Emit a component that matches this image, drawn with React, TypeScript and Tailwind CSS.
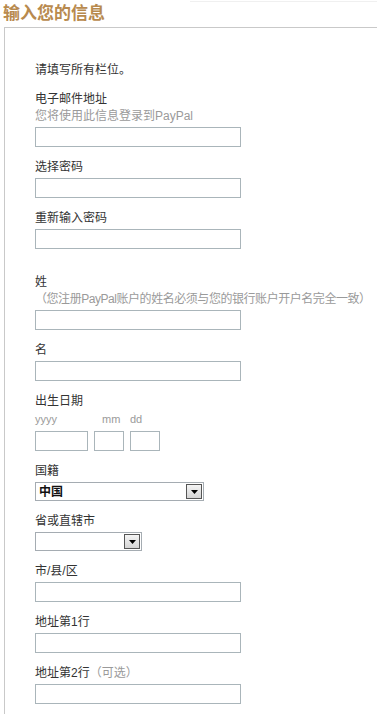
import React from "react";

const font = "font-['Liberation_Sans','Noto_Sans_CJK_SC',sans-serif]";

function Input({ w = "w-[206px]" }: { w?: string }) {
  return <div className={`${w} h-[20px] border border-[#aab5ba] bg-white mt-[2px]`} />;
}

function Label({ children }: { children: React.ReactNode }) {
  return <div className="text-[12px] leading-[17px] text-[#333] whitespace-nowrap">{children}</div>;
}

function Sub({ children, cls = "" }: { children: React.ReactNode; cls?: string }) {
  return <div className={`text-[12px] leading-[17px] text-[#9a9a9a] whitespace-nowrap ${cls}`}>{children}</div>;
}

function Select({ w, value }: { w: string; value?: string }) {
  return (
    <div className={`${w} h-[19px] border border-[#a5acb2] bg-white mt-[2px] flex items-center justify-between`}>
      <span className="pl-[3px] text-[12px] font-bold text-[#111] leading-none">{value}</span>
      <div className="w-[16px] h-[15px] mr-[1px] border border-[#555] bg-gradient-to-b from-[#f4f4f4] to-[#d4d4d4] flex items-center justify-center">
        <svg width="7" height="4" viewBox="0 0 7 4">
          <polygon points="0,0 7,0 3.5,4" fill="#000" />
        </svg>
      </div>
    </div>
  );
}

export default function App() {
  return (
    <div className={`w-[380px] h-[714px] bg-white overflow-hidden ${font}`}>
      <div className="h-[2px] border-b border-[#f0f0f0] ml-[190px] mr-[3px]" />
      <div className="pl-[3px] pt-[1px] h-[25px] text-[17px] leading-[22px] font-bold text-[#b88a4e]">输入您的信息</div>
      <div className="ml-[4px] mr-[3px] border-l border-t border-[#c9c9c9] pl-[30px] pt-[34px] h-[700px]">
        <Label>请填写所有栏位。</Label>

        <div className="mt-[12px]">
          <Label>电子邮件地址</Label>
          <Sub>您将使用此信息登录到PayPal</Sub>
          <Input />
        </div>

        <div className="mt-[12px]">
          <Label>选择密码</Label>
          <Input />
        </div>

        <div className="mt-[12px]">
          <Label>重新输入密码</Label>
          <Input />
        </div>

        <div className="mt-[25px]">
          <Label>姓</Label>
          <Sub cls="tracking-[-0.45px]">（您注册PayPal账户的姓名必须与您的银行账户开户名完全一致）</Sub>
          <Input />
        </div>

        <div className="mt-[12px]">
          <Label>名</Label>
          <Input />
        </div>

        <div className="mt-[12px]">
          <Label>出生日期</Label>
          <div className="flex text-[11px] leading-[19px] text-[#9a9a9a]">
            <span className="w-[67px]">yyyy</span>
            <span className="w-[28px]">mm</span>
            <span>dd</span>
          </div>
          <div className="flex gap-[6px]">
            <Input w="w-[53px]" />
            <Input w="w-[30px]" />
            <Input w="w-[30px]" />
          </div>
        </div>

        <div className="mt-[12px]">
          <Label>国籍</Label>
          <Select w="w-[169px]" value="中国" />
        </div>

        <div className="mt-[12px]">
          <Label>省或直辖市</Label>
          <Select w="w-[107px]" />
        </div>

        <div className="mt-[12px]">
          <Label>市/县/区</Label>
          <Input />
        </div>

        <div className="mt-[12px]">
          <Label>地址第1行</Label>
          <Input />
        </div>

        <div className="mt-[12px]">
          <Label>
            地址第2行<span className="text-[#9a9a9a]">（可选）</span>
          </Label>
          <Input />
        </div>
      </div>
    </div>
  );
}
